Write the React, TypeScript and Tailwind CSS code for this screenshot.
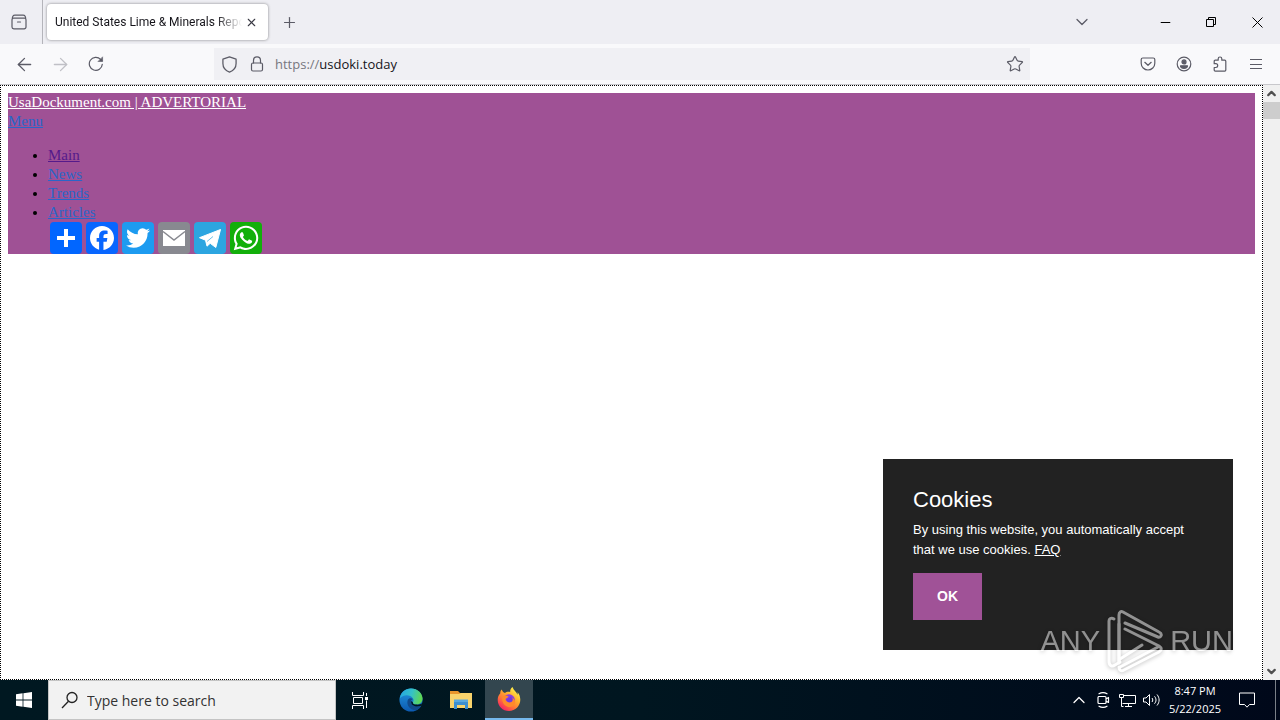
import type { ReactNode } from "react";
import {
  ArrowLeft,
  ArrowRight,
  ChevronDown,
  ChevronUp,
  Minus,
  Plus,
  Star,
  X,
} from "lucide-react";
import { FaWhatsapp } from "react-icons/fa";

const uiFont = "font-['Open_Sans','Noto_Sans',sans-serif]";
const toolbarButton =
  "flex h-8 w-9 shrink-0 items-center justify-center text-[#5b5b66] hover:bg-[#e0e0e6]";

function IconButton({
  label,
  className = toolbarButton,
  children,
}: {
  label: string;
  className?: string;
  children?: ReactNode;
}) {
  return (
    <button type="button" aria-label={label} className={className}>
      {children}
    </button>
  );
}

function LineIcon({ children, size = 16 }: { children: ReactNode; size?: number }) {
  return (
    <svg
      width={size}
      height={size}
      viewBox="0 0 16 16"
      fill="none"
      stroke="currentColor"
      strokeWidth="1.2"
      strokeLinecap="round"
      strokeLinejoin="round"
    >
      {children}
    </svg>
  );
}

function TabStrip() {
  return (
    <div className="flex h-11 items-stretch bg-[#eeeef3]">
      <IconButton
        label="Firefox View"
        className="flex w-[43px] shrink-0 items-center justify-center border-r border-[#b4b4ba] pr-1 text-[#5b5b66]"
      >
        <LineIcon>
          <path d="M3.500 1.200h9M2.500 4.200h11a1.500 1.500 0 0 1 1.500 1.500v7.300a1.800 1.800 0 0 1-1.800 1.800H2.800A1.800 1.800 0 0 1 1 13V5.700a1.500 1.500 0 0 1 1.500-1.500ZM1.300 5C1.300 2.700 2 1.200 3.800 1.200M14.700 5c0-2.300-.7-3.800-2.500-3.800M6.500 8h3" />
        </LineIcon>
      </IconButton>
      <div className="my-1 ml-1 flex w-[221px] items-center rounded bg-white pl-2 shadow-[0_0_3px_rgba(0,0,0,0.45)]">
        <span className="min-w-0 flex-1 overflow-hidden font-['Roboto',sans-serif] whitespace-nowrap text-[12px] text-[#15141a] [mask-image:linear-gradient(to_right,black_86%,transparent)]">
          United States Lime &amp; Minerals Repo
        </span>
        <IconButton
          label="Close tab"
          className="flex w-[26px] shrink-0 items-center pl-[3px] text-[#3a3a44]"
        >
          <X size={13} strokeWidth={2} />
        </IconButton>
      </div>
      <IconButton
        label="New tab"
        className="flex w-[42px] items-center justify-center text-[#5b5b66]"
      >
        <Plus size={17} strokeWidth={1.75} />
      </IconButton>
      <div className="ml-auto flex">
        <IconButton
          label="List all tabs"
          className="mr-[37px] flex w-[46px] items-center justify-center text-[#5b5b66]"
        >
          <ChevronDown size={20} strokeWidth={1.5} />
        </IconButton>
        <IconButton label="Minimize" className="flex w-[46px] items-center justify-center">
          <Minus size={15} strokeWidth={1.6} />
        </IconButton>
        <IconButton label="Restore" className="flex w-[46px] items-center justify-center">
          <svg width="10" height="10" viewBox="0 0 10 10" fill="none" stroke="black">
            <path d="M.5 2.500h7v7h-7zM2.500 2.500v-2h7v7h-2" />
          </svg>
        </IconButton>
        <IconButton label="Close" className="flex w-[46px] items-center justify-center">
          <svg width="11" height="11" viewBox="0 0 11 11" fill="none" stroke="black">
            <path d="m.5.5 10 10m0-10-10 10" />
          </svg>
        </IconButton>
      </div>
    </div>
  );
}

function NavBar() {
  return (
    <div className="flex h-[41px] items-center border-b border-[#c8c8cc] bg-[#f9f9fb] px-[6px]">
      <IconButton label="Back">
        <ArrowLeft size={21} strokeWidth={1.5} />
      </IconButton>
      <IconButton
        label="Forward"
        className="flex h-8 w-9 shrink-0 items-center justify-center text-[#c0c0c6]"
      >
        <ArrowRight size={21} strokeWidth={1.5} />
      </IconButton>
      <IconButton label="Reload">
        <LineIcon>
          <path d="M14.300 8.300A6.500 6.500 0 1 1 12.600 3.400L14 4.800" />
          <path d="M14.600 1.200v4.300h-4.300z" fill="currentColor" strokeWidth=".6" />
        </LineIcon>
      </IconButton>
      <div className="mx-[100px] flex h-8 flex-1 items-center bg-[#f0f0f4] text-[#5b5b66]">
        <IconButton label="Tracking protection" className="flex w-[30px] justify-center">
          <LineIcon size={17}>
            <path d="M8 .9 14.200 3v4c0 4.200-2.700 6.800-6.200 8.100C4.500 13.800 1.800 11.200 1.800 7V3Z" />
          </LineIcon>
        </IconButton>
        <IconButton label="Site information" className="flex w-[26px] justify-center">
          <LineIcon size={16}>
            <rect x="2.500" y="7" width="11" height="8" rx="1.500" />
            <path d="M4.500 7V4.400a3.500 3.500 0 0 1 7 0V7" />
          </LineIcon>
        </IconButton>
        <label htmlFor="address" className="ml-[5px] pt-[2px] text-[13px] text-[#77777f]">
          https://
        </label>
        <input
          id="address"
          type="text"
          defaultValue="usdoki.today"
          className="min-w-0 flex-1 bg-transparent pt-[2px] text-[13px] text-[#15141a] outline-none"
        />
        <IconButton label="Bookmark this page" className="flex w-[30px] justify-center">
          <Star size={18} strokeWidth={1.6} />
        </IconButton>
      </div>
      <IconButton label="Save to Pocket">
        <LineIcon>
          <path d="M2.800 2h10.400a1.600 1.600 0 0 1 1.600 1.600v3.600a6.800 6.800 0 0 1-13.600 0V3.600A1.600 1.600 0 0 1 2.800 2ZM4.800 6.300 8 9.300l3.200-3" />
        </LineIcon>
      </IconButton>
      <IconButton label="Account">
        <LineIcon>
          <circle cx="8" cy="8" r="6.800" />
          <circle cx="8" cy="5.900" r="2" fill="currentColor" />
          <path d="M4.500 9.800h7c0 1.700-1.500 2.500-3.500 2.500s-3.500-.8-3.500-2.500Z" fill="currentColor" />
        </LineIcon>
      </IconButton>
      <IconButton label="Extensions">
        <LineIcon>
          <path d="M2.200 7V5.200a1 1 0 0 1 1-1h3V2.800a1.800 1.800 0 0 1 3.600 0v1.400h3a1 1 0 0 1 1 1v8.900a1 1 0 0 1-1 1H3.200a1 1 0 0 1-1-1v-2.600h1.600a1.900 1.900 0 0 0 0-3.800H2.200Z" />
        </LineIcon>
      </IconButton>
      <IconButton label="Application menu">
        <svg width="12" height="10" viewBox="0 0 12 10" stroke="currentColor">
          <path d="M0 .5h12M0 5.500h12M0 9.500h12" />
        </svg>
      </IconButton>
    </div>
  );
}

const shareLinks = [
  {
    label: "Share",
    color: "bg-[#0166ff]",
    icon: <path fill="white" d="M14 7h4v18h-4zM7 14h18v4H7z" />,
  },
  {
    label: "Facebook",
    color: "bg-[#0866ff]",
    icon: (
      <path
        fill="white"
        d="M28 16c0-6.627-5.373-12-12-12S4 9.373 4 16c0 5.628 3.875 10.350 9.101 11.647v-7.980h-2.474V16H13.100v-1.580c0-4.085 1.849-5.978 5.859-5.978.76 0 2.072.15 2.608.298v3.325c-.283-.03-.775-.045-1.386-.045-1.967 0-2.728.745-2.728 2.683V16h3.920l-.673 3.667h-3.247v8.245C23.395 27.195 28 22.135 28 16"
      />
    ),
  },
  {
    label: "Twitter",
    color: "bg-[#1d9bf0]",
    icon: (
      <path
        fill="white"
        d="M28 8.557a10 10 0 0 1-2.828.775 4.930 4.930 0 0 0 2.166-2.725 9.700 9.700 0 0 1-3.130 1.194 4.920 4.920 0 0 0-3.593-1.550 4.924 4.924 0 0 0-4.794 6.049c-4.090-.21-7.720-2.170-10.150-5.150a4.940 4.940 0 0 0-.665 2.477c0 1.710.87 3.214 2.190 4.100a5 5 0 0 1-2.230-.616v.06c0 2.390 1.700 4.380 3.952 4.830-.414.115-.85.174-1.297.174q-.476-.001-.928-.086a4.935 4.935 0 0 0 4.600 3.420 9.900 9.900 0 0 1-6.114 2.107q-.597 0-1.175-.068a13.950 13.950 0 0 0 7.550 2.213c9.056 0 14.010-7.507 14.010-14.013q0-.32-.015-.637c.96-.695 1.795-1.560 2.455-2.550z"
      />
    ),
  },
  {
    label: "Email",
    color: "bg-[#888990]",
    icon: (
      <>
        <path fill="white" d="M5 8h22v16H5z" />
        <path d="m5 9.500 11 8.500 11-8.500" fill="none" stroke="#888990" strokeWidth="1.500" />
      </>
    ),
  },
  {
    label: "Telegram",
    color: "bg-[#2ca5e0]",
    icon: (
      <>
        <path
          fill="white"
          stroke="white"
          strokeLinejoin="round"
          d="M26.500 7.500 5.500 15.700l6 2.500 1.500 6 3.200-2.900 5.600 4.200z"
        />
        <path d="m13 19.500 6-5" stroke="#2ca5e0" strokeWidth=".7" />
      </>
    ),
  },
  {
    label: "WhatsApp",
    color: "bg-[#12af0a]",
    icon: <FaWhatsapp x="2" y="2" size={28} color="white" />,
  },
];

const menuLinks = ["Main", "News", "Trends", "Articles"];

function SiteHeader() {
  return (
    <header className="bg-[#9f5195] font-['Liberation_Serif',serif] text-[15px] leading-[19px] text-[#2a66c8]">
      <div>
        <a href="#home" className="text-white underline">
          UsaDockument.com | ADVERTORIAL
        </a>
      </div>
      <div>
        <a href="#menu" className="underline">
          Menu
        </a>
      </div>
      <ul className="mt-[15px] list-disc pl-10 marker:text-black">
        {menuLinks.map((name) => (
          <li key={name}>
            <a
              href={`#${name.toLowerCase()}`}
              className={name === "Main" ? "text-[#551a8b] underline" : "underline"}
            >
              {name}
            </a>
          </li>
        ))}
      </ul>
      <div className="flex gap-1 pl-[42px]">
        {shareLinks.map((link) => (
          <a
            key={link.label}
            href="#share"
            aria-label={link.label}
            className={`h-8 w-8 rounded ${link.color}`}
          >
            <svg width="32" height="32" viewBox="0 0 32 32">
              {link.icon}
            </svg>
          </a>
        ))}
      </div>
    </header>
  );
}

function CookieNotice() {
  return (
    <section className="absolute right-[29px] bottom-[29px] w-[350px] bg-[#222222] px-[30px] pt-[27px] pb-[30px] font-['Liberation_Sans',sans-serif] text-white">
      <h2 className="text-[22px] leading-7">Cookies</h2>
      <p className="mt-[6px] text-[13px] leading-5">
        By using this website, you automatically accept that we use cookies.{" "}
        <a href="#faq" className="underline">
          FAQ
        </a>
      </p>
      <button
        type="button"
        className="mt-[13px] h-[47px] w-[69px] bg-[#a05297] text-[14px] font-bold"
      >
        OK
      </button>
    </section>
  );
}

function Watermark() {
  return (
    <div className="pointer-events-none absolute right-[29px] bottom-[6px] flex items-center gap-[6px] font-['Liberation_Sans',sans-serif] text-[29px] leading-none text-white opacity-50 drop-shadow-[0_1px_2px_rgba(0,0,0,0.5)]">
      <span>ANY</span>
      <svg
        width="58"
        height="64"
        viewBox="0 0 58 64"
        fill="none"
        stroke="currentColor"
        strokeWidth="3"
        strokeLinejoin="round"
        strokeLinecap="round"
      >
        <path d="M8 10C5 8 3 10 3 12v40c0 5 3 6 6 4l5-3" />
        <path d="M13 52V6c0-3 2-4 4-3l36 20c4 2 2 6-1 5L19 14" />
        <path d="M13 15v39M19 20l34 17c3 2 3 4 0 6L18 61c-3 2-5 0-5-3" />
        <path d="M36 36 14 50M52 38 14 58" />
      </svg>
      <span>RUN</span>
    </div>
  );
}

function Scrollbar() {
  return (
    <div className="flex w-[17px] shrink-0 flex-col bg-[#f0f0f0] text-[#505050]">
      <IconButton label="Scroll up" className="flex h-[17px] items-center justify-center">
        <ChevronUp size={13} strokeWidth={4} />
      </IconButton>
      <div className="h-[17px] bg-[#cdcdcd]" />
      <IconButton
        label="Scroll down"
        className="mt-auto flex h-[17px] items-center justify-center"
      >
        <ChevronDown size={13} strokeWidth={4} />
      </IconButton>
    </div>
  );
}

function EdgeIcon() {
  return (
    <svg width="24" height="24" viewBox="0 0 26 26">
      <defs>
        <linearGradient id="edgeTop" x1="0" y1="0.300" x2="1" y2="0.500">
          <stop offset="0" stopColor="#25a8e0" />
          <stop offset=".5" stopColor="#35c1c8" />
          <stop offset="1" stopColor="#62d94b" />
        </linearGradient>
        <linearGradient id="edgeSide" x1="0" y1="0" x2="0" y2="1">
          <stop offset="0" stopColor="#2398e0" />
          <stop offset="1" stopColor="#0c59b0" />
        </linearGradient>
      </defs>
      <circle cx="13" cy="13" r="12.500" fill="url(#edgeSide)" />
      <path
        d="M1 11C2 4.500 7 .5 13 .5c7 0 12.500 5 12.500 11 0 4-3 6.500-6.500 6.500-2.500 0-4.500-1-4-2.500 1-1.500 1-3 0-4.500C12.500 7 5 6.500 1 11Z"
        fill="url(#edgeTop)"
      />
      <path
        d="M9.500 13c-2 6 3 11.500 9.500 11 2-1 4-2.500 5-4.800-5 2.500-11 .3-11-4.200 0-1.500 1-2.500 2-3-2-1.500-4.500-1-5.500 1Z"
        fill="#114a8b"
      />
      <path
        d="M13.200 14c-.8 4.500 4.500 7.500 10.800 5.200l1.300-2.700c-1.500 1.200-4 1.800-6.300 1.500-2.500 0-4.500-1-4-2.500Z"
        fill="#001620"
      />
    </svg>
  );
}

function ExplorerIcon() {
  return (
    <svg width="22" height="20" viewBox="0 0 22 20">
      <path d="M0 1h8l2 2h11v4H0z" fill="#e8962c" />
      <path d="M0 4h9l2-1h11v15H0z" fill="#f8d36c" />
      <path d="M4 11h14v8h-3v-4H7v4H4z" fill="#3c8fd0" />
      <path d="M4 9.500h14V12H4z" fill="#5aa9de" />
      <path d="M8 15h6v3H8z" fill="#f8d36c" />
    </svg>
  );
}

function FirefoxIcon() {
  return (
    <svg width="24" height="24" viewBox="0 0 24 24">
      <defs>
        <linearGradient id="foxFlame" x1="0.850" y1="0.100" x2="0.200" y2="1">
          <stop offset="0" stopColor="#fff44f" />
          <stop offset=".35" stopColor="#ffae2b" />
          <stop offset=".65" stopColor="#ff7139" />
          <stop offset="1" stopColor="#f5156c" />
        </linearGradient>
      </defs>
      <path
        d="M15.500 0c-2 1.500-2.500 3.500-2.300 5C11 4.500 9 5 8 6 6.500 5.500 5 4 4.800 2.500 3.500 3.500 3.200 5 3.300 6.300 1.500 8 .7 10.500.7 13c0 6.200 5 11 11.300 11s11.300-5 11.300-11.200c0-3-1-5.800-2.800-7.600.2 1 .2 1.800 0 2.600C19.500 4.500 16.500 3.500 15.500 0Z"
        fill="url(#foxFlame)"
      />
      <circle cx="12" cy="13" r="5.800" fill="#8a3ee0" />
      <path
        d="M5.500 9.500c2-1.500 4.500-1 6 0-.5 1.200-2 1.500-2.500 2-1.200 1.500.8 4 3.500 3.200 2-.5 2.500-2.200 1-4.700 3.500 1 5.500 4 4.300 6.800C16.500 20 13 20.800 10 19.500 6 17.800 4.500 13.500 5.500 9.500Z"
        fill="#ff8a2a"
      />
      <path d="M9.500 12c2-.2 3-1.300 4-2.500 3 1 3 5 0 5.800-2 .7-4.500-1-4-3.300Z" fill="#7139e0" />
    </svg>
  );
}

const trayButton = "flex h-full w-6 items-center justify-center";

function SystemTray() {
  return (
    <div className="ml-auto flex items-center text-white">
      <IconButton label="Show hidden icons" className={trayButton}>
        <ChevronUp size={20} strokeWidth={1.5} />
      </IconButton>
      <IconButton label="Meet now" className={trayButton}>
        <LineIcon>
          <path d="M3.500 4.500h6.500a1 1 0 0 1 1 1v5a1 1 0 0 1-1 1H4a1 1 0 0 1-1-1v-5ZM11 7l2.500-1.500v5L11 9M4 1.800c2.500-1.500 5.500-1.500 8 0M4 14.200c2.500 1.500 5.500 1.500 8 0" />
        </LineIcon>
      </IconButton>
      <IconButton label="Network" className={trayButton}>
        <svg width="17" height="15" viewBox="0 0 17 15" fill="none" stroke="white">
          <path d="M5 2.500h11.500v8H3.500M9.500 10.500v3M6 13.500h7M.5 1.500h4v3h-4zM2.500 4.500v9h2" />
        </svg>
      </IconButton>
      <IconButton label="Volume" className={trayButton}>
        <svg width="17" height="14" viewBox="0 0 17 14" fill="none" stroke="white">
          <path d="M.5 5h2.500l3.500-3.500v11L3 9H.5zM9 5c1 1.300 1 2.700 0 4M11.500 3.300c2 2.300 2 5.100 0 7.400M14 1.500c2.800 3.500 2.800 7.500 0 11" />
        </svg>
      </IconButton>
      <time className="w-16 text-center text-[11px] leading-[18px]">
        <span className="block">8:47 PM</span>
        <span className="block">5/22/2025</span>
      </time>
      <IconButton
        label="Notifications"
        className="flex h-full w-10 items-center justify-center"
      >
        <svg width="16" height="16" viewBox="0 0 16 16" fill="none" stroke="white">
          <path d="M.5 1h15v11.500h-5L8 15.200 5.500 12.500h-5z" />
        </svg>
      </IconButton>
      <IconButton label="Show desktop" className="ml-2 h-full w-[5px] border-l border-[#7a8088]" />
    </div>
  );
}

function Taskbar() {
  return (
    <footer className="flex h-10 bg-linear-to-r from-[#001821] via-[#001620] to-[#00081a]">
      <IconButton label="Start" className="flex w-12 shrink-0 items-center justify-center">
        <svg width="16" height="16" viewBox="0 0 16 16" fill="white">
          <path d="M0 2.200 6.600 1.300v6.300H0zM7.400 1.200 16 0v7.600H7.400zM0 8.400h6.600v6.300L0 13.800zM7.400 8.400H16V16l-8.600-1.200z" />
        </svg>
      </IconButton>
      <label
        htmlFor="search"
        className="flex w-[288px] items-center gap-2 border border-[#c4c4c4] bg-[#f2f2f2] pl-3"
      >
        <svg width="18" height="18" viewBox="0 0 18 18" fill="none" stroke="#222" strokeWidth="1.300">
          <circle cx="11" cy="6.500" r="5" />
          <path d="M7.500 10.300 1 17" />
        </svg>
        <input
          id="search"
          type="text"
          placeholder="Type here to search"
          className="min-w-0 flex-1 bg-transparent text-[14px] outline-none placeholder:text-[#333333]"
        />
      </label>
      <IconButton label="Task view" className="flex w-[49px] items-center justify-center">
        <svg width="17" height="17" viewBox="0 0 17 17" fill="none" stroke="white">
          <path d="M.5 0v3.500h11V0M.5 17v-3.500h11V17M1.500 5.500h9v6h-9zM14.500 1v3M14.500 8.500V16" />
          <path d="M13 5h3v3h-3z" fill="white" stroke="none" />
        </svg>
      </IconButton>
      <IconButton label="Microsoft Edge" className="flex w-[51px] items-center justify-center">
        <EdgeIcon />
      </IconButton>
      <IconButton label="File Explorer" className="flex w-[49px] items-center justify-center">
        <ExplorerIcon />
      </IconButton>
      <IconButton
        label="Firefox"
        className="flex w-12 items-center justify-center border-b-2 border-[#76b9ed] bg-[#33464f]"
      >
        <FirefoxIcon />
      </IconButton>
      <SystemTray />
    </footer>
  );
}

export default function App() {
  return (
    <div className={`flex min-h-screen flex-col bg-white ${uiFont}`}>
      <TabStrip />
      <NavBar />
      <div className="flex flex-1">
        <main className="relative flex-1 border border-dotted border-black p-[7px]">
          <SiteHeader />
          <CookieNotice />
          <Watermark />
        </main>
        <Scrollbar />
      </div>
      <Taskbar />
    </div>
  );
}
